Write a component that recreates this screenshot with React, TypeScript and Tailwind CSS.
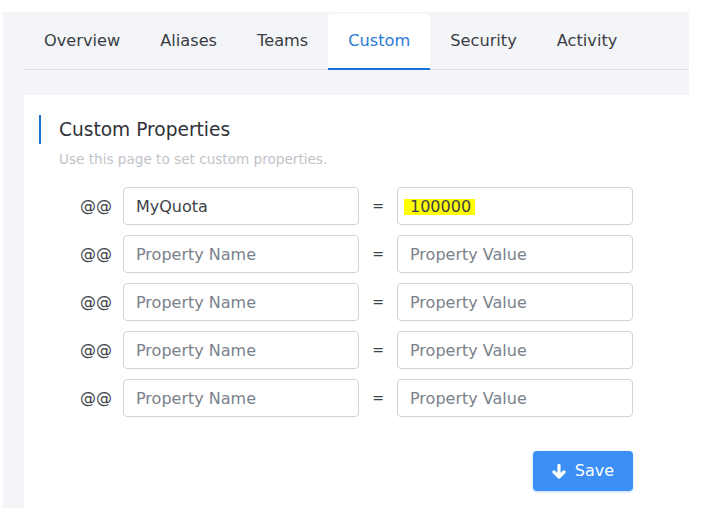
const tabs = ['Overview', 'Aliases', 'Teams', 'Custom', 'Security', 'Activity']

interface PropRow {
  name: string
  value: string
}

const rows: PropRow[] = [
  { name: 'MyQuota', value: '100000' },
  { name: '', value: '' },
  { name: '', value: '' },
  { name: '', value: '' },
  { name: '', value: '' },
]

const font = { fontFamily: '"DejaVu Sans", "Open Sans", sans-serif' }

function Field({ text, placeholder, highlight }: { text: string; placeholder: string; highlight?: boolean }) {
  return (
    <div className="w-[236px] h-[38px] flex items-center border border-[#ced3dc] rounded-[4px] bg-white px-[12px] pt-[1px] text-[16px]">
      {text ? (
        highlight ? (
          <span className="bg-[#ffff00] text-[#3d4148] pl-[6px] pr-[4px] -ml-[6px] leading-[16px]">{text}</span>
        ) : (
          <span className="text-[#3d4148]">{text}</span>
        )
      ) : (
        <span className="text-[#7b818b]">{placeholder}</span>
      )}
    </div>
  )
}

export default function App() {
  return (
    <div className="w-[708px] h-[516px] bg-white pl-[3px] pt-[12px]" style={font}>
      <div className="w-[686px] h-[496px] bg-[#f4f5f9] pl-[21px] flex flex-col">
        {/* Tabs */}
        <div className="flex h-[58px] pt-[2px] border-b border-[#dfe1e6]">
          {tabs.map(t => (
            <div
              key={t}
              className={`px-5 flex items-center text-[16.2px] ${
                t === 'Custom'
                  ? 'bg-white rounded-t-[4px] text-[#2a7ad8] border-b-2 border-[#1a73d9] -mb-px'
                  : 'text-[#3a3d44]'
              }`}
            >
              {t}
            </div>
          ))}
        </div>

        {/* Card */}
        <div className="mt-[25px] flex-1 bg-white pl-[15px] pt-[20px]">
          <div className="border-l-2 border-[#1a73d9] pl-[18px] h-[29px] flex items-center">
            <span className="text-[18.6px] text-[#2f3238]">Custom Properties</span>
          </div>
          <div className="pl-[20px] mt-[5px] text-[13.6px] text-[#bfc3ca]">Use this page to set custom properties.</div>

          <div className="mt-[18px] flex flex-col gap-[10px]">
            {rows.map((r, i) => (
              <div key={i} className="flex items-center">
                <div className="w-[84px] text-right text-[16px] text-[#3d4148] pr-[11px]">@@</div>
                <Field text={r.name} placeholder="Property Name" />
                <div className="w-[38px] text-center text-[14px] text-[#3d4148]">=</div>
                <Field text={r.value} placeholder="Property Value" highlight={i === 0} />
              </div>
            ))}
          </div>

          <div className="w-[594px] flex justify-end mt-[34px]">
            <button className="w-[100px] h-[40px] rounded-[4px] bg-[#3b8ff6] text-white text-[16px] flex items-center justify-center gap-[9px] shadow-[0_1px_3px_rgba(59,143,246,0.35)]">
              <svg width="14" height="15" viewBox="0 0 14 15" fill="none">
                <path d="M7 1.5V12.5M2 8l5 5 5-5" stroke="white" strokeWidth="3.2" strokeLinecap="round" strokeLinejoin="round" />
              </svg>
              <span>Save</span>
            </button>
          </div>
        </div>
      </div>
    </div>
  )
}
